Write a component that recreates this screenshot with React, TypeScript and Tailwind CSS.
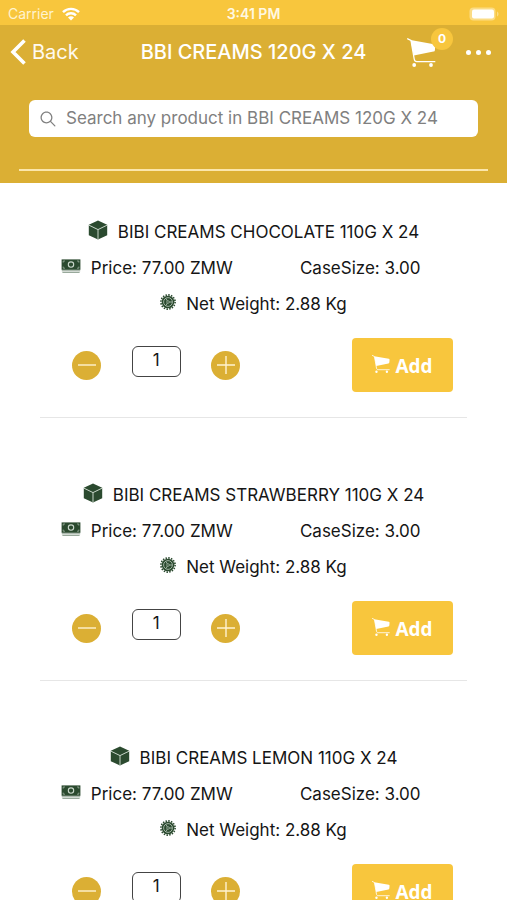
import { useState } from "react";
import { IoIosSearch } from "react-icons/io";

const products = [
  { name: "BIBI CREAMS CHOCOLATE 110G X 24", price: "77.00", caseSize: "3.00", weight: "2.88" },
  { name: "BIBI CREAMS STRAWBERRY 110G X 24", price: "77.00", caseSize: "3.00", weight: "2.88" },
  { name: "BIBI CREAMS LEMON 110G X 24", price: "77.00", caseSize: "3.00", weight: "2.88" },
];

type Product = (typeof products)[number];

const CartIcon = ({ className }: { className?: string }) => (
  <svg viewBox="0 0 29 29" className={className} fill="currentColor">
    <path d="M3.6 2 27 6.2c.8.2 1.3.7 1.3 1.4l-.4 4.6c-.1.8-.6 1.3-1.4 1.4L6.8 17.6Z" />
    <path
      d="M.7.8 4 2.5 7.2 21c.3 1.8 1 2.7 2.6 2.7h18"
      fill="none"
      stroke="currentColor"
      strokeWidth="1.3"
      strokeLinecap="round"
    />
    <circle cx="7.2" cy="27" r="1.9" />
    <circle cx="24" cy="27" r="1.9" />
  </svg>
);

const CubeIcon = () => (
  <svg viewBox="0 0 20 20" className="mb-[6px] size-5 shrink-0">
    <path d="M10 .6 19.2 4.8v10.4L10 19.4.8 15.2V4.8Z" fill="#2b4a2f" />
    <path d="M1 5.2 10 9.6l9-4.4M10 9.6v9.6" fill="none" stroke="#c9d6ca" strokeWidth="1" />
  </svg>
);

const CashIcon = () => (
  <svg viewBox="0 0 20 14" className="mb-[6px] h-[14px] w-5 shrink-0">
    <rect x="0.6" y="0.4" width="18.8" height="10.4" fill="#2b4a2f" />
    <circle cx="10" cy="5.6" r="2.7" fill="none" stroke="#c9d6ca" strokeWidth="1.1" />
    <path
      d="M2.2 3.6V2h1.8M16 2h1.8v1.6M2.2 7.6v1.6h1.8M16 9.2h1.8V7.6"
      fill="none"
      stroke="#9fb3a1"
      strokeWidth="0.8"
    />
    <path d="M.8 11.8h18.4M1.4 13.4h17.2" stroke="#7f9482" strokeWidth="0.9" />
  </svg>
);

const GearIcon = () => (
  <svg viewBox="0 0 16 16" className="mb-[6px] size-4 shrink-0" fill="none" stroke="#2b4a2f">
    <circle cx="8" cy="8" r="7.1" strokeWidth="1.6" strokeDasharray="1.5 1.29" />
    <circle cx="8" cy="8" r="6.3" fill="#2b4a2f" stroke="none" />
    <circle cx="8" cy="8" r="4.4" stroke="#a9bbab" strokeWidth="0.9" />
    <path d="M8 8h4.2M8 8 5.9 4.4M8 8l-2.1 3.6" stroke="#a9bbab" strokeWidth="0.9" />
    <circle cx="8" cy="8" r="1.3" fill="#2b4a2f" stroke="#a9bbab" strokeWidth="0.7" />
  </svg>
);

const StatusBar = () => (
  <div className="grid h-[25px] shrink-0 grid-cols-3 items-center bg-[#f8c63d] px-2 pt-[3px] text-sm leading-4 text-white">
    <div className="flex items-center gap-2">
      <span className="text-[#fff3cf]">Carrier</span>
      <svg viewBox="0 0 18 14" className="h-[14px] w-[18px]" fill="none" stroke="currentColor" strokeWidth="2.4">
        <path d="M1 5.2a11.3 11.3 0 0 1 16 0" />
        <path d="M4 8.3a7 7 0 0 1 10 0" />
        <path d="M9 13.6 6 10.6a4.2 4.2 0 0 1 6 0Z" fill="currentColor" stroke="none" />
      </svg>
    </div>
    <span className="text-center font-semibold text-[#fff8e2]">3:41 PM</span>
    <svg viewBox="0 0 30 14" className="h-[14px] w-[30px] justify-self-end">
      <rect x="0.5" y="0.5" width="26" height="13" rx="4" fill="#fbdc85" />
      <path d="M28 4.5c2 .8 2 4.2 0 5Z" fill="#fbdc85" />
      <rect x="3" y="2.5" width="22" height="9" rx="2" fill="#fff" />
    </svg>
  </div>
);

const Header = () => (
  <header className="shrink-0 bg-[#dbaf34] pb-3">
    <div className="grid h-[54px] grid-cols-[1fr_auto_1fr] items-center px-[10px] text-white">
      <button className="flex items-center gap-[6px] text-xl text-[#fffaf0]">
        <svg viewBox="0 0 16 26" className="h-[26px] w-4" fill="none" stroke="#fff" strokeWidth="3.6">
          <path d="M14.5 1.5 3 13l11.5 11.5" />
        </svg>
        Back
      </button>
      <h1 className="text-xl font-medium">BBI CREAMS 120G X 24</h1>
      <div className="flex items-center justify-end gap-[30px] pr-[6px]">
        <button aria-label="Cart" className="relative">
          <CartIcon className="size-[29px]" />
          <span className="absolute -top-[10px] left-6 flex size-[22px] items-center justify-center rounded-full bg-[#f8c63d] text-xs font-bold">
            0
          </span>
        </button>
        <button aria-label="More options" className="flex gap-[5px]">
          <span className="size-[5px] rounded-full bg-white" />
          <span className="size-[5px] rounded-full bg-white" />
          <span className="size-[5px] rounded-full bg-white" />
        </button>
      </div>
    </div>
    <div className="px-[19px]">
      <div className="border-b-2 border-[#fbe6ab] px-[10px] pt-[21px] pb-8">
        <label className="flex h-[37px] items-center gap-2 rounded-md bg-white px-[9px] text-[#808080]">
          <IoIosSearch className="size-5 shrink-0" />
          <input
            type="text"
            aria-label="Search products"
            placeholder="Search any product in BBI CREAMS 120G X 24"
            className="min-w-0 flex-1 bg-transparent text-[17px] outline-none placeholder:text-[#808080]"
          />
        </label>
      </div>
    </div>
  </header>
);

const ProductItem = ({ product }: { product: Product }) => {
  const [quantity, setQuantity] = useState("1");
  const step = (by: number) => setQuantity(String(Math.max(1, (Number(quantity) || 0) + by)));

  return (
    <li className="border-b border-[#e6e6e6] pb-[25px] text-[17px] text-[#151515]">
      <h2 className="flex h-9 items-center justify-center gap-[10px]">
        <CubeIcon />
        {product.name}
      </h2>
      <div className="grid h-9 grid-cols-2 items-center">
        <p className="flex items-center justify-center gap-[10px]">
          <CashIcon />
          Price: {product.price} ZMW
        </p>
        <p className="text-center">CaseSize: {product.caseSize}</p>
      </div>
      <p className="flex h-9 items-center justify-center gap-[10px]">
        <GearIcon />
        Net Weight: {product.weight} Kg
      </p>
      <div className="mt-[15px] flex items-center justify-between pr-[14px] pl-3">
        <div className="grid w-[52%] grid-cols-3 items-center justify-items-center">
          <button
            aria-label="Decrease quantity"
            onClick={() => step(-1)}
            className="flex size-[29px] items-center justify-center rounded-full bg-[#dbaf34] text-[#fff3d0]"
          >
            <svg viewBox="0 0 18 18" className="size-[18px]" stroke="currentColor" strokeWidth="1.4">
              <path d="M0 9h18" />
            </svg>
          </button>
          <input
            type="text"
            aria-label={`Quantity of ${product.name}`}
            value={quantity}
            onChange={(e) => setQuantity(e.target.value)}
            className="mb-2 h-[31px] w-[49px] rounded-md border border-[#444] pb-[3px] text-center outline-none"
          />
          <button
            aria-label="Increase quantity"
            onClick={() => step(1)}
            className="flex size-[29px] items-center justify-center rounded-full bg-[#dbaf34] text-[#fff3d0]"
          >
            <svg viewBox="0 0 18 18" className="size-[18px]" stroke="currentColor" strokeWidth="1.4">
              <path d="M0 9h18M9 0v18" />
            </svg>
          </button>
        </div>
        <button className="flex h-[54px] w-[101px] items-center justify-center gap-[5px] rounded bg-[#f8c63d] pt-[2px] font-['Open_Sans',sans-serif] text-[19px] font-bold text-white">
          <CartIcon className="mb-1 size-[18px]" />
          Add
        </button>
      </div>
    </li>
  );
};

const App = () => {
  return (
    <div className="flex h-screen flex-col bg-white font-['Inter',sans-serif] text-base">
      <StatusBar />
      <Header />
      <main className="min-h-0 flex-1 overflow-y-auto [scrollbar-width:none]">
        <ul className="flex flex-col gap-[60px] px-10 pt-8">
          {products.map((product) => (
            <ProductItem key={product.name} product={product} />
          ))}
        </ul>
      </main>
    </div>
  );
};

export default App;
